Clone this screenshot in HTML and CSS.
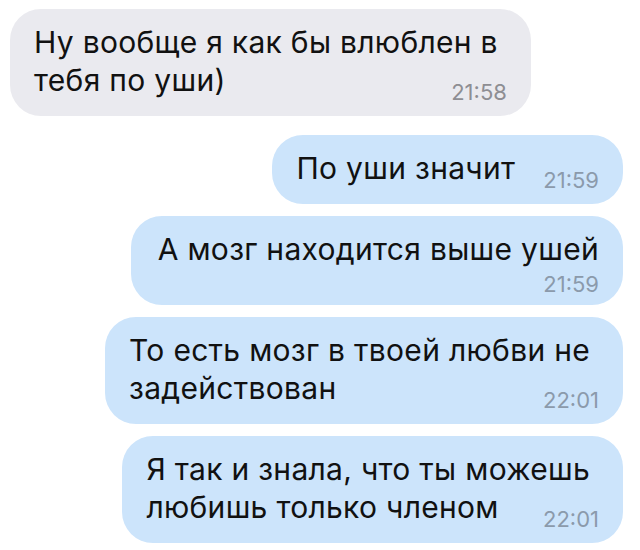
FILE: index.html
```html
<!DOCTYPE html>
<html lang="ru">

<head>
  <meta charset="UTF-8">
  <meta name="viewport" content="width=device-width, initial-scale=1.0">
  <title>Диалог</title>
  <link rel="stylesheet" href="styles.css">
</head>

<body>
  <div class="chat">
    <div class="msg in">
      Ну вообще я как бы влюблен в<br>тебя по уши)<span class="time">21:58</span>
    </div>
    <div class="msg out">
      По уши значит<span class="time">21:59</span>
    </div>
    <div class="msg out stacked">
      А мозг находится выше ушей<span class="time">21:59</span>
    </div>
    <div class="msg out">
      То есть мозг в твоей любви не<br>задействован<span class="time">22:01</span>
    </div>
    <div class="msg out">
      Я так и знала, что ты можешь<br>любишь только членом<span class="time">22:01</span>
    </div>
  </div>
</body>

</html>
```

FILE: styles.css
```css
* {
  margin: 0;
  padding: 0;
  box-sizing: border-box;
}

html,
body {
  width: 100%;
  height: 100%;
  background: #fff;
}

.chat {
  display: flex;
  flex-direction: column;
  padding: 9px 17px 0 10px;
  font-family: Inter, "Liberation Sans", Arial, sans-serif;
}

.msg {
  display: flow-root;
  max-width: 580px;
  padding: 14px 33px 13px 24px;
  border-radius: 31px;
  font-size: 30px;
  line-height: 38px;
  letter-spacing: 0.3px;
  color: #111;
}

.in {
  align-self: flex-start;
  background: #eaeaef;
}

.out {
  align-self: flex-end;
  margin-top: 12px;
  background: #cce4fb;
}

.in + .out {
  margin-top: 19px;
}

.time {
  float: right;
  margin: 20px -9px 0 28px;
  font-size: 22px;
  line-height: 22px;
  letter-spacing: 0;
  color: #8e8e93;
}

.out .time {
  color: #8b9aab;
}

/* время не влезло в строку — уходит вниз */
.stacked {
  padding: 14px 24px 10px 27px;
}

.stacked .time {
  display: block;
  float: none;
  margin: 5px 0 0;
  text-align: right;
}
```
